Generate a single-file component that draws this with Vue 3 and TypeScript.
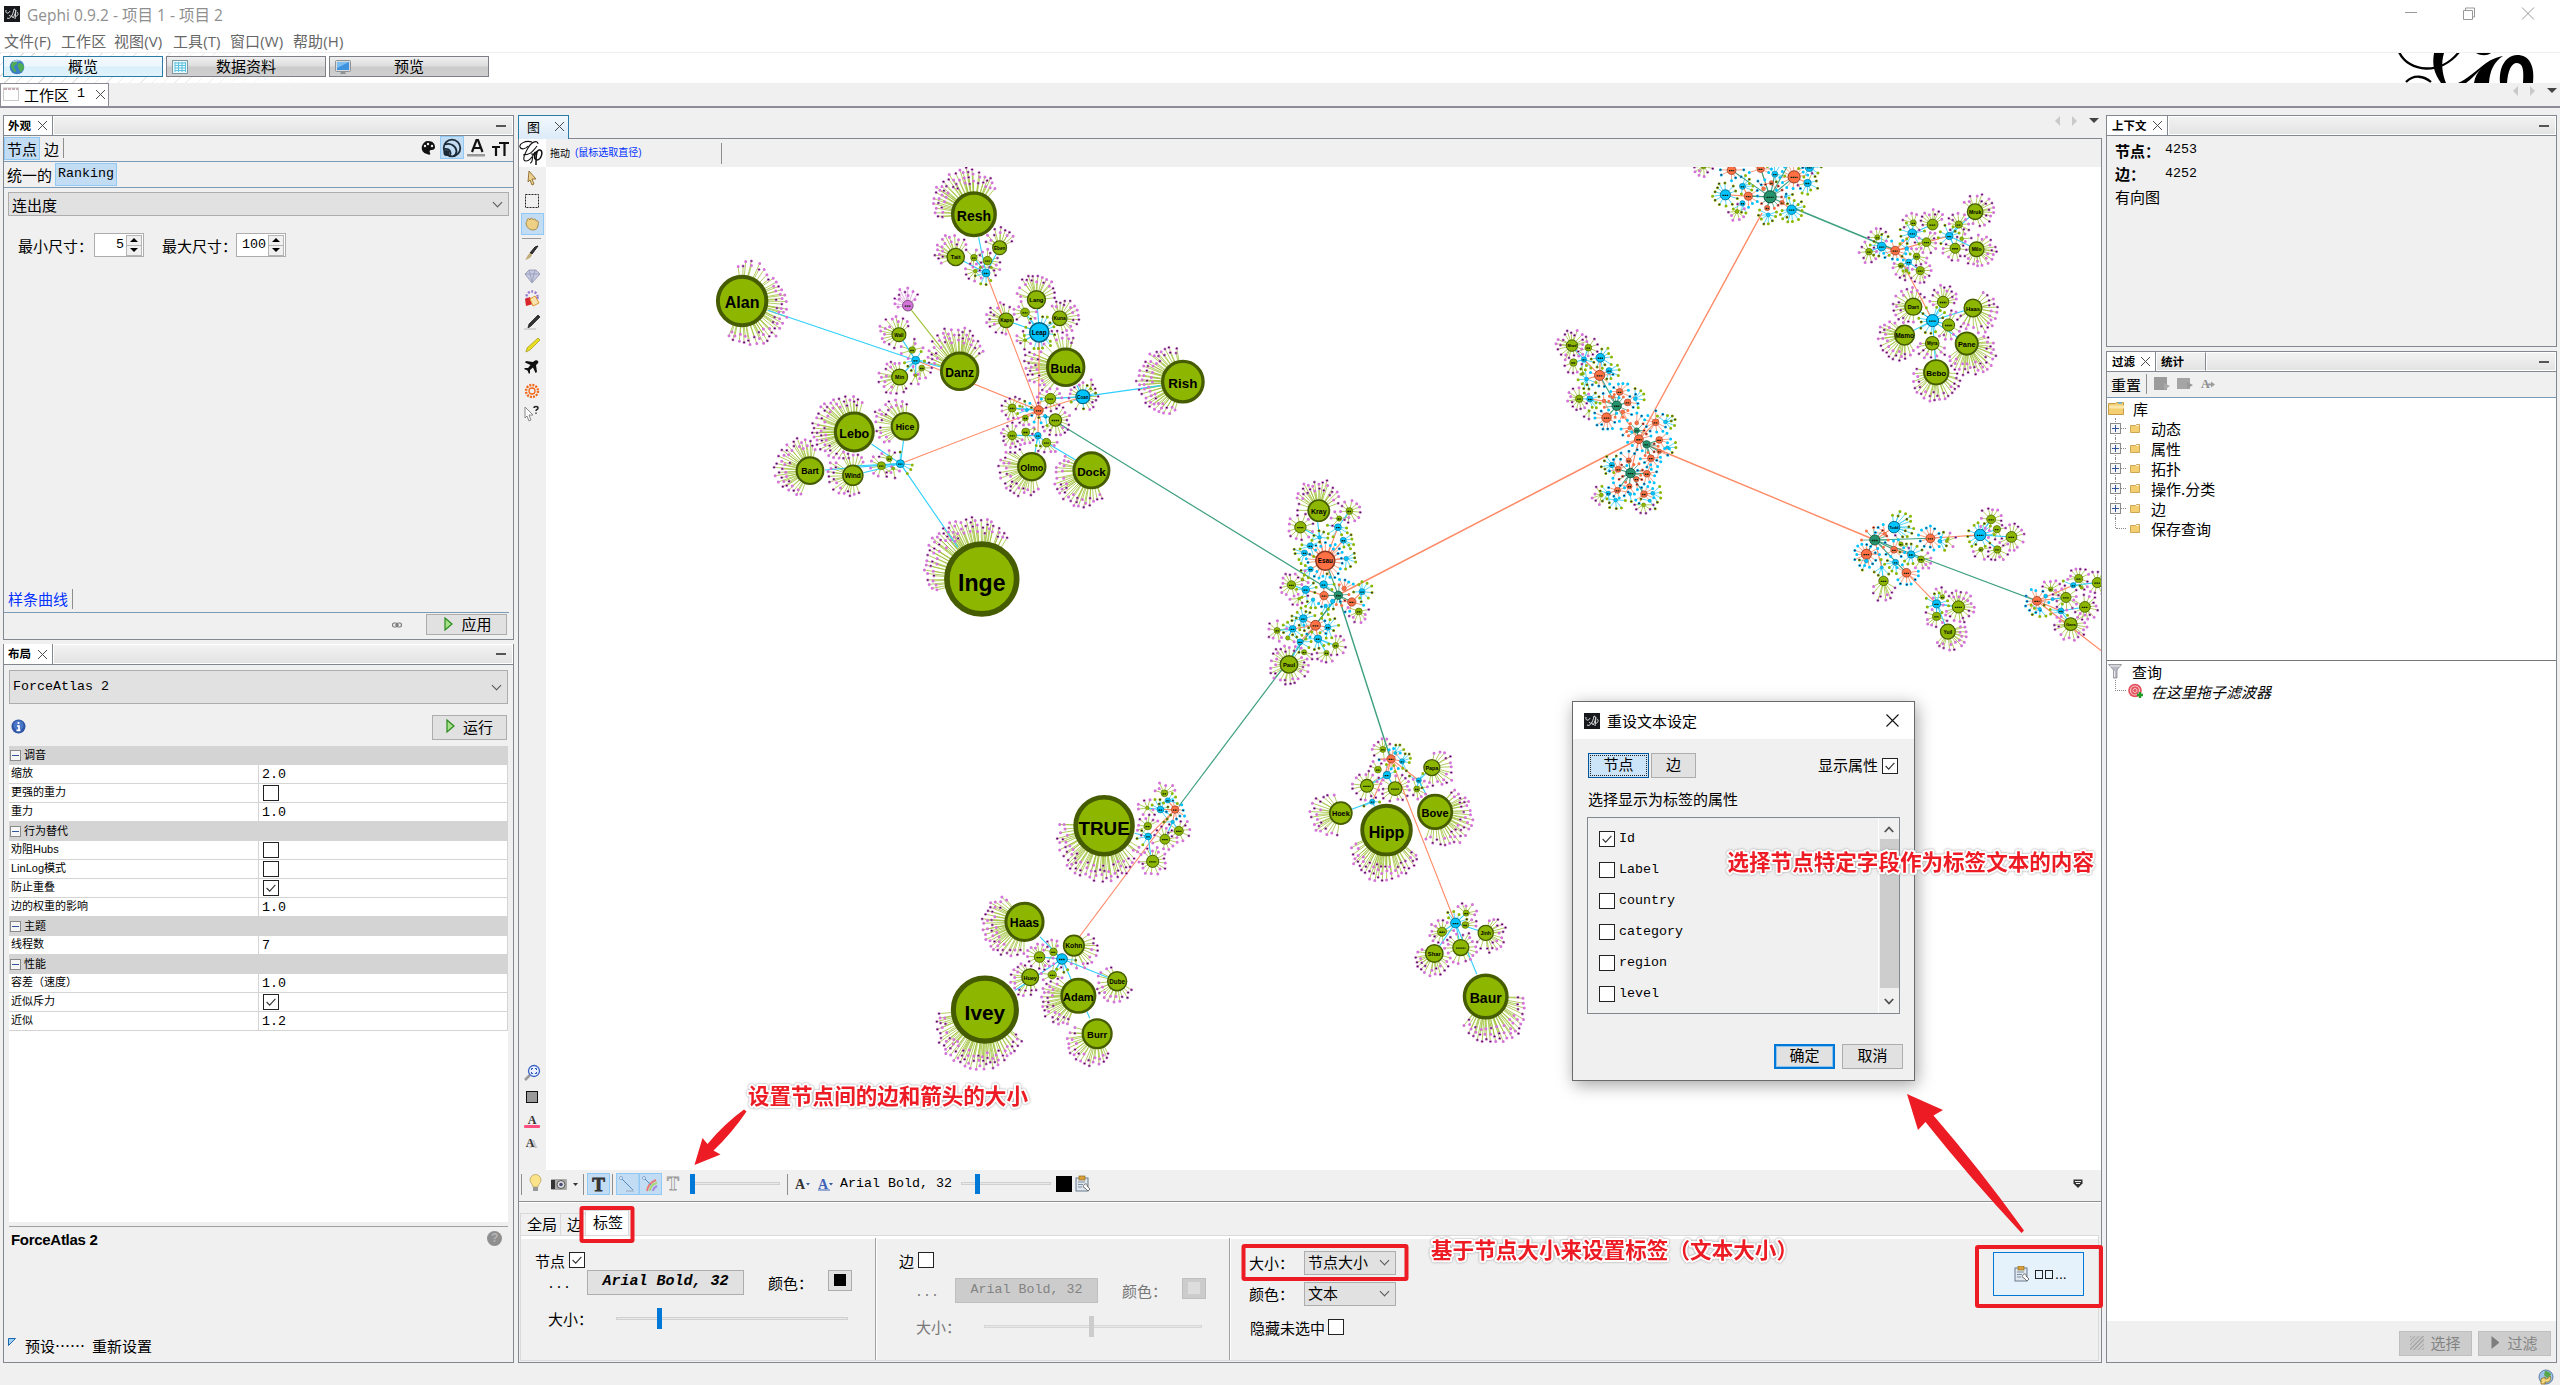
<script setup lang="ts">
type Kind = 'g' | 'b' | 'o' | 't' | 'p'
interface GNode { x: number; y: number; r: number; kind: Kind; n: number; a0: number; a1: number; d: number; label: string; extra: boolean }

const FILL: Record<Kind, string> = { g: '#8db600', b: '#00c4ff', o: '#ff7045', t: '#24936e', p: '#d574d8' }
const RIM: Record<Kind, string> = { g: '#465c00', b: '#00627f', o: '#8a3a22', t: '#124a37', p: '#6d3f6d' }
const EDGE: Record<Kind, string> = { g: '#9fc23a', b: '#2fcfff', o: '#ff8a66', t: '#3c9f80', p: '#d9a0d9' }
const LEAF: Record<Kind, Kind> = { g: 'p', b: 'g', o: 'b', t: 'o', p: 'p' }

/* Each region keeps its own origin and units; rows are: x y r kind [leaves from to depth label] */
const regions = [
  {
    ox: 700, oy: 150, sx: 2.8, sy: 3,
    nodes: `118 453 73 g 120 -40 112 24 Alan;118 453 73 g 9 -100 -40 18;767 193 64 g 110 170 312 26 Resh;716 321 26 g 34 150 320 15 Tait;839 293 21 g 34 200 350 15 Eben
767 323 10 g 6;805 332 13 g 10;771 363 6 g 6;785 352 4 g 3;815 352 4 g 3;801 369 12 b 5;942 449 27 g 38 180 365 18 Lang;1007 505 22 g 28 -130 80 14 Kuna;857 511 22 g 28 90 290 14 Kaps
910 487 13 g 8;910 571 4 g 6;950 547 29 b 16 0 360 7 Leap;1024 652 55 g 95 125 285 24 Buda;1072 740 21 b 4 0 360 6 Coan;1072 740 21 g 16;1094 717 4 g 3;981 746 16 g 14
727 664 55 g 90 195 320 26 Danz;582 467 16 p 22 170 340 13;557 554 21 g 26 100 320 14 Wall;594 600 10 g 6;604 631 12 b 5;559 681 24 g 28 60 270 14 Min;621 654 9 g 8;604 676 5 g 6
1352 695 61 g 95 105 262 25 Rish;432 846 57 g 110 120 285 24 Lebo;574 829 40 g 50 130 275 20 Hice;308 962 40 g 60 110 300 24 Bart;428 976 30 g 44 70 310 17 Wind
530 926 9 g 5;508 947 12 g 12;561 941 12 b 4;541 955 5 g 3;948 781 14 o 7;915 781 5 b 5;966 798 5 b 4;874 774 12 g 12;995 810 19 g 22 0 360 9;911 804 9 g 6;903 770 3 g 3
874 856 13 g 14;912 846 12 g 12;937 838 3 g 3;946 857 10 b 5;970 878 13 g 12;929 950 41 g 60 70 250 21 Olmo;1096 961 53 g 95 65 210 23 Dock;789 1287 105 g 165 165 302 29 Inge`,
    edges: `801 369 948 781 o;948 781 561 941 o;948 781 604 631 o;948 781 1072 740 o;948 781 950 547 o;948 781 946 857 o;948 781 874 774 b;948 781 911 804 o;604 631 190 481 b;561 941 722 1192 b
561 941 480 882 b;561 941 570 872 b;561 941 350 960 b;561 941 457 968 b;561 941 508 947 b;561 941 430 948 b;1072 740 1290 707 b;1072 740 1055 706 b;1072 740 981 746 b;801 369 780 262 b;801 369 839 293 b
801 369 716 321 b;801 369 771 363 b;801 369 767 323 b;950 547 945 476 b;950 547 1007 505 b;950 547 857 511 b;950 547 910 487 b;950 547 910 571 b;604 631 557 554 b;604 631 559 681 b;604 631 672 650 b
604 631 604 676 b;946 857 938 908 b;970 878 1052 930 b;946 857 970 878 b;946 857 874 856 b;582 467 727 664 g;966 798 995 810 b`,
  },
  {
    ox: 900, oy: 460, sx: 2.45, sy: 2.529,
    nodes: `500 925 75 g 130 28 185 27 TRUE;305 1168 49 g 100 90 235 25 Haas;208 1390 83 g 150 38 178 28 Ivey;426 1228 27 g 42 -40 120 16 Kohn;437 1355 44 g 85 105 220 23 Adam
483 1451 38 g 60 60 200 20 Burr;532 1318 25 g 32 30 250 14 Dube;319 1308 22 g 32 60 250 14 Huey;342 1257 14 g 18;376 1244 10 g 8;397 1262 14 b 4;373 1302 11 g 9
619 1015 16 g 18;649 959 13 g 13;683 938 12 g 14;607 926 10 g 9;608 952 9 b 3;638 884 9 b 7;656 861 7 b 5;648 843 9 g 11;674 884 10 o 7;606 880 5 g 9;668 915 5 b 5
953 517 23 g 40 0 360 11 Paul;1042 255 25 o 24 0 360 9 Esau;1026 128 28 g 56 180 345 21 Kray;981 170 15 g 18;1101 129 9 g 12;1076 148 7 g 4;1073 170 9 b 6;1086 203 8 b 8;1005 217 8 b 7
991 235 8 b 7;1006 276 7 b 6;1093 249 6 b 8;1028 196 5 b 5;959 316 11 g 12;994 328 10 b 9;1038 315 10 b 8;1039 343 11 o 9;1074 342 11 t 8;1088 325 6 o 4;1132 333 8 b 9;1107 359 11 o 9
1124 383 9 g 11;1012 353 5 b 5;1060 357 6 b 4;1043 369 5 b 6;988 401 10 b 11;1018 418 13 o 12;1048 423 8 b 8;962 427 9 b 7;924 431 8 g 11;950 450 6 g 7;980 460 8 b 6;1024 452 10 b 9
1067 469 8 g 10;1045 488 7 g 8;990 486 7 g 7;986 302 4 g 6;978 350 4 g 5;1192 936 64 g 110 35 158 27 Hipp;1311 890 44 g 80 -50 110 23 Bove;1080 893 29 g 28 95 250 21 Hoek
1303 778 21 g 34 -90 100 16 Papa;1144 824 17 g 24;1213 831 18 g 20;1193 797 10 b 8;1203 756 11 o 9;1183 732 8 g 8;1230 762 7 b 8;1171 783 9 g 9;1271 810 7 b 3;1266 832 8 g 9;1157 864 7 b 3;1213 741 4 b 5
1435 1357 56 g 60 0 128 29 Baur;1309 1248 23 g 36 10 200 15 Shar;1374 1233 21 g 24;1435 1196 20 g 30 -80 140 14 Jinh;1328 1193 12 g 13;1361 1171 13 b 5;1385 1176 9 g 7;1387 1146 8 g 7`,
    edges: `397 1262 343 1206 b;397 1262 437 1355 b;397 1262 508 1308 b;397 1262 281 1342 b;397 1262 342 1257 b;397 1262 373 1302 b;397 1262 376 1244 b;458 1395 465 1412 b;608 952 575 944 b;608 952 614 998 b
674 884 608 952 o;674 884 638 884 o;674 884 668 915 o;674 884 656 861 o;668 915 649 959 b;668 915 683 938 b;638 884 606 880 b;1157 864 1107 883 b;1157 864 1163 876 b;1203 756 1157 864 o;1203 756 1193 797 o
1203 756 1271 810 o;1203 756 1230 762 o;1203 756 1171 756 o;1271 810 1303 778 b;1271 810 1266 832 b;1271 810 1290 848 b;1193 797 1144 824 b;1193 797 1213 831 b;1361 1171 1309 1248 b;1361 1171 1374 1233 b
1361 1171 1435 1196 b;1361 1171 1413 1300 b;1361 1171 1328 1193 b;1361 1171 1387 1146 b;1042 255 1028 196 o;1042 255 1074 342 t;1028 196 1023 156 b;1028 196 981 170 b;1073 170 1101 129 b;1042 255 1086 203 o
1042 255 1005 217 o;1042 255 991 235 o;1042 255 1006 276 o;1042 255 1093 249 o;1042 255 1073 170 o;1074 342 1018 418 t;1074 342 1039 343 t;1074 342 1107 359 t;1018 418 988 401 o;1018 418 962 427 o
1018 418 980 460 o;1018 418 1024 452 o;1018 418 1048 423 o;980 460 953 517 b;1039 343 994 328 o;1039 343 1038 315 o;994 328 959 316 b;962 427 924 431 b;962 427 950 450 b;1107 359 1132 333 o;1024 452 1067 469 b;1024 452 1045 488 b`,
  },
  {
    ox: 1540, oy: 160, sx: 2.751, sy: 2.958,
    nodes: `527 30 13 o 10;607 26 11 o 8;699 50 18 o 16;741 22 12 b 9;736 68 11 b 5;736 68 11 g 12;646 42 9 b 9;510 103 15 b 20;557 78 9 b 9;573 107 12 o 10;633 109 18 t 14;692 147 14 b 18;557 128 8 b 9
542 152 6 g 9;628 162 6 b 9;625 142 8 o 6;637 68 7 o 6;666 126 7 o 6;450 18 8 g 12;615 85 6 o 5;676 108 4 b 6
1197 153 23 g 38 -150 110 12 Mruk;1201 264 22 g 40 -90 150 13 Milo;1142 261 15 g 16;1126 225 11 b 7;1152 191 11 g 14;1080 191 16 g 26 170 370 10;1024 217 13 b 6;1027 186 9 g 8;1063 243 13 g 12;977 268 13 o 8
940 256 13 b 10;905 271 10 g 13;928 229 8 g 10;1009 262 6 b 5;1036 285 10 g 8;1014 302 9 b 5;993 312 8 g 7;1046 327 12 g 17;1008 327 5 g 6;1160 233 6 g 8
1027 434 25 g 42 80 320 13 Dart;1109 420 17 g 28 160 380 12;1191 438 26 g 48 -60 150 19 Haas;1080 475 18 b 12;1003 518 29 g 66 60 235 19 Mamo;1124 488 18 g 24 0 360 9;1079 542 20 g 32 20 180 14 Myra
1174 543 33 g 80 -30 145 23 Pane;1090 628 36 g 72 -20 195 18 Bebo
88 549 17 g 30 0 360 10 Mrad;133 555 10 g 11;121 590 8 b 6;92 599 11 g 13;166 585 13 b 13;190 623 9 b 9;164 637 15 o 12;128 648 6 b 10;118 632 5 g 8;211 727 14 t 12;219 686 10 o 11;241 717 10 o 9
262 706 6 b 8;108 706 11 g 15;137 707 9 b 8;176 713 6 o 7;183 762 14 o 13;183 762 14 b 8;228 745 6 o 5;200 702 5 o 5;135 742 4 g 5;266 800 8 t 7;272 826 13 o 8;293 841 11 t 10;318 776 10 o 11;328 828 10 o 11
266 778 6 o 6;305 882 10 o 11;328 862 7 o 7;249 926 14 t 14;215 915 9 o 7;198 902 8 b 9;244 889 8 o 7;294 928 10 o 11;265 944 8 o 7;246 965 8 o 7;213 977 9 o 9;286 988 10 o 11;188 986 7 b 9
169 991 6 g 8;208 1006 6 b 9;248 988 5 b 7;285 1020 6 g 8;310 986 6 b 9;302 1008 5 b 8;247 793 6 o 6;345 775 6 b 8;350 850 5 b 5
974 1086 17 b 20 -100 60 16 Todd;921 1124 15 t 7;898 1166 15 o 18;898 1186 6 b 10;974 1153 10 o 8;1021 1167 11 b 8;1048 1181 10 g 11;993 1136 7 g 8;978 1190 9 b 8;1008 1221 13 o 14;945 1245 14 g 12 20 160 16
1074 1119 13 o 12;1100 1128 6 b 7;1119 1127 5 g 6;1211 1109 17 b 13;1241 1063 13 g 18;1257 1092 11 g 9;1297 1115 16 g 26;1258 1152 11 g 15;1213 1152 7 g 8;1091 1313 12 b 7;1151 1322 18 g 30 0 360 10
1091 1350 12 g 12;1122 1395 22 g 34 -60 150 13 Yuil;1107 1293 7 g 9;940 1205 5 b 6;949 1106 5 o 5;1367 1304 13 o 10;1447 1294 15 g 18;1499 1322 16 g 24;1460 1373 19 g 32 0 360 10 Gara;1433 1334 9 b 7
1482 1238 12 g 16;1467 1258 8 b 6;1533 1250 15 g 20;1405 1270 7 g 9;1391 1290 6 b 6;1410 1299 5 b 4;1490 1265 5 g 6;1375 1328 5 b 6`,
    edges: `633 109 527 30 t;633 109 607 26 t;633 109 699 50 t;633 109 573 107 t;633 109 646 42 t;633 109 680 20 t;633 109 666 126 t;633 109 625 142 t;573 107 510 103 o;666 126 692 147 o;699 50 736 68 o;573 107 557 78 o
977 268 940 256 o;977 268 1024 217 o;977 268 1126 225 o;977 268 1014 302 o;977 268 1009 262 o;1000 310 1080 475 o;1024 217 1080 191 b;1024 217 1063 243 b;1024 217 1027 186 b;1126 225 1197 153 b
1126 225 1201 264 b;1126 225 1142 261 b;1126 225 1152 191 b;1014 302 1046 327 b;1014 302 1036 285 b;1014 302 993 312 b;940 256 905 271 b;1080 475 1027 434 b;1080 475 1109 420 b;1080 475 1191 438 b
1080 475 1003 518 b;1080 475 1124 488 b;1080 475 1090 628 b;1080 475 1174 543 b;164 637 166 585 o;164 637 121 590 o;164 637 190 623 o;164 637 128 648 o;121 590 88 549 b;121 590 92 599 b;121 590 133 555 b
164 637 211 727 t;211 727 219 686 t;211 727 241 717 t;211 727 183 762 t;211 727 176 713 t;176 713 137 707 o;137 707 108 706 b;211 727 272 826 o;272 826 266 800 t;272 826 293 841 t;272 826 318 776 o
293 841 328 828 t;293 841 305 882 t;293 841 328 862 t;272 826 249 926 o;249 926 215 915 t;249 926 244 889 t;249 926 294 928 t;249 926 265 944 t;249 926 246 965 t;249 926 213 977 t;249 926 286 988 t
215 915 198 902 o;213 977 188 986 o;286 988 310 986 o;921 1124 974 1086 o;921 1124 898 1166 t;921 1124 974 1153 t;921 1124 1074 1119 t;921 1124 1008 1221 t;921 1124 940 1205 o;940 1205 945 1245 b
974 1153 1021 1167 o;1021 1167 1048 1181 b;1074 1119 1211 1109 o;1211 1109 1241 1063 b;1211 1109 1297 1115 b;1211 1109 1258 1152 b;1211 1109 1257 1092 b;1008 1221 1091 1313 o;1091 1313 1151 1322 b
1091 1313 1091 1350 b;1091 1313 1122 1395 b;1367 1304 1433 1334 o;1367 1304 1447 1294 o;1367 1304 1467 1258 o;1433 1334 1499 1322 b;1433 1334 1460 1373 b;1467 1258 1533 1250 b;1467 1258 1482 1238 b;1410 1299 1447 1294 b`,
  },
]

const nodes: GNode[] = []
const links: { x1: number; y1: number; x2: number; y2: number; c: string; w: number }[] = []
const longLinks: [number, number, number, number, Kind, number][] = [
  [1045, 415, 1338, 595, 't', 1.2], [1338, 595, 1179, 806, 't', 1.2], [1338, 595, 1390, 757, 't', 1.4],
  [1338, 595, 1639, 439, 'o', 1.5], [1639, 439, 1762, 213, 'o', 1.4], [1791, 207, 1895, 250, 't', 1.4],
  [1645, 444, 1875, 540, 'o', 1.4], [1875, 540, 2037, 601, 't', 1.3], [2037, 601, 2103, 652, 'o', 1.3],
  [1175, 809, 1074, 944, 'o', 1.2], [1391, 759, 1455, 922, 'o', 1.1],
]
for (const l of longLinks) links.push({ x1: l[0], y1: l[1], x2: l[2], y2: l[3], c: EDGE[l[4]], w: l[5] })

for (const rg of regions) {
  for (const row of rg.nodes.split(/[;\n]/)) {
    const f = row.trim().split(/\s+/)
    const x = rg.ox + +f[0] / rg.sx
    const y = rg.oy + +f[1] / rg.sy
    /* a second row at the same spot only adds leaves to the node that is already there */
    nodes.push({
      x, y, r: +f[2] / rg.sx, kind: f[3] as Kind, extra: nodes.some(o => o.x === x && o.y === y),
      n: +(f[4] ?? 0), a0: +(f[5] ?? 0), a1: +(f[6] ?? 360), d: +(f[7] ?? 8), label: f[8] ?? '',
    })
  }
  for (const row of rg.edges.split(/[;\n]/)) {
    const f = row.trim().split(/\s+/)
    links.push({
      x1: rg.ox + +f[0] / rg.sx, y1: rg.oy + +f[1] / rg.sy, x2: rg.ox + +f[2] / rg.sx, y2: rg.oy + +f[3] / rg.sy,
      c: EDGE[f[4] as Kind], w: 1.1,
    })
  }
}
const discs = nodes.filter(n => !n.extra)

let seed = 20177
function rnd(): number {
  seed = (seed * 1103515245 + 12345) % 2147483648
  return seed / 2147483648
}

const stalks: Record<Kind, string> = { g: '', b: '', o: '', t: '', p: '' }
const dots: Record<Kind, string> = { g: '', b: '', o: '', t: '', p: '' }
let darkDots = ''
const taken: [number, number][] = []
for (const nd of nodes) {
  let placed = 0
  const span = nd.a1 - nd.a0
  const big = nd.d > 15
  for (let tries = 0; placed < nd.n && tries < nd.n * 12; tries++) {
    const t = rnd()
    const a = (nd.a0 + t * span) * Math.PI / 180
    const reach = span < 300 ? nd.d * (0.5 + 0.5 * Math.sin(Math.PI * t)) * (0.85 + rnd() * 0.15) : nd.d
    const inner = big ? 3 + reach * 0.2 : 3.2
    const rr = nd.r + inner + Math.sqrt(rnd()) * Math.max(reach - inner, 1)
    const x = nd.x + Math.cos(a) * rr
    const y = nd.y + Math.sin(a) * rr
    const gap = 4 + rnd() * 0.7
    if (taken.some(p => Math.abs(p[0] - x) < gap && Math.hypot(p[0] - x, p[1] - y) < gap)) continue
    if (nodes.some(o => o.r > 2 && Math.hypot(o.x - x, o.y - y) < o.r + 2)) continue
    taken.push([x, y])
    placed++
    const k = LEAF[nd.kind]
    stalks[nd.kind] += `M${nd.x.toFixed(1)} ${nd.y.toFixed(1)}L${x.toFixed(1)} ${y.toFixed(1)}`
    dots[k] += `M${x.toFixed(1)} ${y.toFixed(1)}h.01`
    if (rnd() < 0.42) darkDots += `M${(x - 0.8).toFixed(1)} ${y.toFixed(1)}h1.6`
  }
}
const kinds: Kind[] = ['g', 'b', 'o', 't', 'p']

const params = [
  { h: '调音' }, { k: '缩放', v: '2.0' }, { k: '更强的重力', c: 0 }, { k: '重力', v: '1.0' },
  { h: '行为替代' }, { k: '劝阻Hubs', c: 0 }, { k: 'LinLog模式', c: 0 }, { k: '防止重叠', c: 1 }, { k: '边的权重的影响', v: '1.0' },
  { h: '主题' }, { k: '线程数', v: '7' },
  { h: '性能' }, { k: '容差（速度）', v: '1.0' }, { k: '近似斥力', c: 1 }, { k: '近似', v: '1.2' },
] as { h?: string; k?: string; v?: string; c?: number }[]

const menus = [['文件(F)', 57], ['工作区', 53], ['视图(V)', 59], ['工具(T)', 57], ['窗口(W)', 63], ['帮助(H)', 60]] as [string, number][]
const library = ['动态', '属性', '拓扑', '操作.分类', '边', '保存查询']
const fields = ['Id', 'Label', 'country', 'category', 'region', 'level']
</script>

<template>
  <div class="win">
    <header class="title">
      <svg width="16" height="16" viewBox="0 0 16 16"><rect width="16" height="16" fill="#16181b" /><path d="M2 4c-1 4 3 4 4 1M3 12c3 2 6-3 7-9M5 9c2 3 3-1 4 3M10 3c3 0 1 6-1 9M12 4l-1 9M13 6c2 1 1 5-2 4" fill="none" stroke="#dcdcdc" stroke-width="1" /></svg>
      <span class="ttext">Gephi 0.9.2 - 项目 1 - 项目 2</span>
      <svg class="wctl" width="132" height="16" viewBox="0 0 132 16" fill="none" stroke="#999" stroke-width="1"><path d="M1 6.500h12M59.500 4.500h9v9h-9zM61.500 4v-2h9v9h-2M118 1.500l12 12M130 1.500l-12 12" /></svg>
    </header>
    <nav class="menu"><span v-for="m in menus" :key="m[0]" :style="{ width: m[1] + 'px' }">{{ m[0] }}</span></nav>
    <div class="modes">
      <div class="mode on"><svg width="16" height="16" viewBox="0 0 16 16"><circle cx="8" cy="8" r="7.300" fill="#3d7fc4" /><path d="M3 4c2-2 5-2 5 0s-3 2-3 4 2 2 2 4-2 1-3-1-3-4-1-7zM10 4c3 0 5 2 5 4s-2 5-3 5-2-3-3-5 0-3 1-4z" fill="#4fae54" /><path d="M3 3c2-2 6-2 9-1-3 0-6 1-9 1z" fill="#cfe4f5" /></svg><b>概览</b></div>
      <div class="mode"><svg width="16" height="16" viewBox="0 0 16 16"><rect x=".5" y="1.500" width="15" height="13" fill="#eaf7fb" stroke="#7d99a5" /><path d="M3 4h11M3 6.500h11M3 9h11M3 11.500h11M3 3v10M6.500 3v10M10 3v10M13.500 3v10" stroke="#5cc3e0" /></svg><b>数据资料</b></div>
      <div class="mode"><svg width="16" height="16" viewBox="0 0 16 16"><rect x=".5" y="1.500" width="15" height="11" rx="1" fill="#d9dcdf" stroke="#8d9297" /><rect x="2" y="3" width="12" height="8" fill="#3f93de" /><path d="M2 3h12L2 9z" fill="#7dbdf0" /><path d="M5 15h6l-1-2H6z" fill="#8d9297" /></svg><b>预览</b></div>
      <svg class="biglogo" width="140" height="30" viewBox="0 0 140 30"><path d="M1 -1c10 21 42 23 60 0M8 29c8-8 18-6 25 0" fill="none" stroke="#000" stroke-width="2.300" /><path d="M36 0c-2 12 0 20 7 30h5c-4-10-5-20-2-30z" /><path d="M60 30c18-8 26-24 45-27-9 6-13 14-14 27H76c1-6 3-10 7-14-6 6-11 11-15 14zM78 0c5 3 11 3 15 0zM102 30c-1-16 5-27 17-28 12 0 18 10 16 28h-10c1-14 0-19-6-20-6 0-9 8-10 20z" /></svg>
    </div>
    <div class="wsbar">
      <div class="wstab"><svg width="16" height="16" viewBox="0 0 16 16"><rect x=".5" y="2" width="15" height="12.500" fill="#fff" stroke="#c9c9c9" /><path d="M1 3h14" stroke="#c7b0b5" stroke-width="2" stroke-dasharray="3 1" /></svg><span>工作区</span><span class="m">1</span><i class="cx"></i></div>
      <div class="navs"><i class="tl"></i><i class="tr"></i><i class="td"></i></div>
    </div>
    <main class="main">
      <section class="col left">
        <div class="panel p1">
          <div class="ph"><div class="pt">外观<i class="cx"></i></div><div class="pbar"><i class="mn"></i></div></div>
          <div class="row26">
            <span class="sel w36">节点</span><span class="bian">边</span><i class="vs h20"></i><i class="grow"></i>
            <svg class="rank" width="90" height="24" viewBox="0 0 90 24"><rect x="20.500" y=".5" width="23" height="22" fill="#c2dcf3" stroke="#90c8f6" /><path d="M8 5c5 0 7 3 7 6s-3 3-4 3-2 1-1 3-1 2-3 1c-4-1-6-4-5-8 1-3 3-5 6-5z" fill="#111" /><g fill="#f0f0f0"><circle cx="5" cy="10" r="1.200" /><circle cx="8" cy="8" r="1.200" /><circle cx="12" cy="10" r="1.200" /></g><circle cx="32" cy="12" r="8.300" fill="none" stroke="#1b2a36" stroke-width="1.800" /><path d="M25 8.500c6-2 11 2 11.500 6.500 0 2-1 4-3 5M24.500 13c5-1 7 3 5.500 7" fill="none" stroke="#1b2a36" stroke-width="1.800" /><circle cx="26.500" cy="17" r="3" fill="#1b2a36" /><path d="M52 16l4.500-12h1.500l4.500 12M54 12h7" fill="none" stroke="#111" stroke-width="2.200" /><rect x="47" y="18" width="18" height="2.500" fill="#999" /><path d="M72 11h8M76 11v9M79 7h10M84.500 7v13" fill="none" stroke="#111" stroke-width="2.200" /></svg>
          </div>
          <div class="row26"><span class="uni">统一的</span><span class="sel m w62">Ranking</span></div>
          <div class="combo c1"><span>连出度</span><i class="chev"></i></div>
          <div class="spins">
            <span class="sl">最小尺寸：</span><span class="spin m">5<i class="ud"><u></u><s></s></i></span>
            <span class="sl s2">最大尺寸：</span><span class="spin m">100<i class="ud"><u></u><s></s></i></span>
          </div>
          <i class="grow"></i>
          <div class="spline"><span>样条曲线</span><i class="vs h20"></i></div>
          <div class="apply"><svg width="10" height="6" viewBox="0 0 10 6" fill="none" stroke="#777" stroke-width="1.200"><rect x=".6" y="1" width="4.500" height="4" rx="1.500" /><rect x="4.900" y="1" width="4.500" height="4" rx="1.500" /><path d="M3 3h4" /></svg><div class="btn b81"><svg width="9" height="14" viewBox="0 0 9 14"><path d="M1 1l7 6-7 6z" fill="#a6e08a" stroke="#2b8a1c" stroke-width="1.200" /></svg>应用</div></div>
        </div>
        <div class="panel p2">
          <div class="ph"><div class="pt">布局<i class="cx"></i></div><div class="pbar"><i class="mn"></i></div></div>
          <div class="combo c2"><span class="m">ForceAtlas 2</span><i class="chev"></i></div>
          <div class="run">
            <svg width="15" height="15" viewBox="0 0 15 15"><circle cx="7.500" cy="7.500" r="7" fill="#2d55a5" /><circle cx="7.500" cy="6.500" r="5" fill="#4a78c8" /><path d="M7.500 3v2M6 7h2v4M5.500 11.300h4" stroke="#fff" stroke-width="1.700" fill="none" /></svg>
            <div class="btn b75"><svg width="9" height="14" viewBox="0 0 9 14"><path d="M1 1l7 6-7 6z" fill="#a6e08a" stroke="#2b8a1c" stroke-width="1.200" /></svg>运行</div>
          </div>
          <div class="table">
            <div v-for="(p, i) in params" :key="i" class="row" :class="{ th: p.h }">
              <template v-if="p.h"><i class="box minus"></i><span>{{ p.h }}</span></template>
              <template v-else><span class="tk">{{ p.k }}</span><span class="tv m"><i v-if="p.c !== undefined" class="cb"><svg v-if="p.c" viewBox="0 0 16 16"><path d="M3 8l3.500 3.500 6.500-7" /></svg></i>{{ p.v }}</span></template>
            </div>
          </div>
          <div class="desc"><b>ForceAtlas 2</b><span class="q">?</span></div>
          <i class="grow"></i>
          <div class="presets"><svg width="8" height="8" viewBox="0 0 8 8"><path d="M.5.5h7L.5 7.500z" fill="#9bd3f5" stroke="#1c66b0" /></svg><span>预设……</span><span class="reset">重新设置</span></div>
        </div>
      </section>

      <section class="center">
        <div class="ctabs"><div class="ctab">图<i class="cx"></i></div><div class="navs n2"><i class="tl"></i><i class="tr"></i><i class="td"></i></div></div>
        <div class="cbody">
          <div class="tip">
            <span class="glogo"><svg width="26" height="28" viewBox="0 0 26 28" fill="none" stroke="#111" stroke-width="1.100"><path d="M13 3C6 1 0 5 1 8s6 2 8-1M19 5c0-4-6-3-10 4S3 22 7 22s8-7 9-9M4 16c6 0 9-2 14-9M12 15h5M14 15c-1 5 0 9-3 9" /><path d="M19 12c-4 1-5 9-1 9s7-9 3-10-4 8-4 15" stroke-width="1.500" /></svg></span>
            <span class="t1">拖动</span><span class="t2">(鼠标选取直径)</span><i class="vs"></i>
          </div>
          <div class="stage">
            <aside class="tools">
              <svg width="27" height="1003" viewBox="519 167 27 1003">
                <path d="M529 171l7 8h-4l2 5-2 1-2-5-2 2z" fill="#edd08b" stroke="#8a6b2c" stroke-width=".9" />
                <rect x="525.500" y="194.500" width="13" height="13" fill="none" stroke="#222" stroke-dasharray="2 1" />
                <rect x="521.500" y="213.500" width="22" height="21" fill="#c2dcf3" stroke="#90c8f6" />
                <path d="M527 221c0-3 2-3 3-1 0-3 3-2 3 0 1-2 3-1 3 1 2-1 3 1 2 4 0 3-2 5-5 5s-6-2-7-6c0-2 1-3 1-3z" fill="#edcf86" stroke="#9a7a38" stroke-width=".8" />
                <path d="M522 238.500h19" stroke="#999" />
                <path d="M538 246l-6 8-2-1 5-6z" fill="#333" stroke="#222" /><path d="M530 253l2 2c-1 3-4 4-7 5 2-2 2-5 5-7z" fill="#c3ad7a" />
                <path d="M525 274l4-4h7l4 4-8 9z" fill="#c5c8e0" stroke="#8f93ad" stroke-width=".8" /><path d="M525 274h14M529 270l3 12 3-12" stroke="#8f93ad" stroke-width=".7" fill="none" />
                <circle cx="532" cy="297" r="5.500" fill="none" stroke="#9a7ad0" stroke-width="2.500" stroke-dasharray="2 1.500" /><path d="M525 299l5-2 3 7-7 2z" fill="#d8262c" /><path d="M530 299l5-3 4 7-6 3z" fill="#f7e3b0" stroke="#e0962d" />
                <path d="M538 315l2 2-9 9-3 2 1-4z" fill="#333" stroke="#222" stroke-width=".8" /><path d="M524 329h12" stroke="#ccc" stroke-width="1.500" />
                <path d="M538 338l2 2-10 10-4 2 1-4z" fill="#eadf23" stroke="#9c9410" stroke-width=".7" />
                <path d="M538 361c1 1 0 2.500-2 4l1 7-1.500 1-2.500-5.500-3 2.500v3l-1 1-1.500-3.500-3.500-1.500 1-1 3 0 2.500-3-5.500-2.500 1-1.500 7 1c2-2 4-2.500 5-1z" fill="#111" />
                <circle cx="532" cy="391" r="3" fill="none" stroke="#f26a1b" stroke-width="1.300" /><circle cx="532" cy="391" r="6" fill="none" stroke="#f26a1b" stroke-width="2.400" stroke-dasharray="2 1.100" />
                <path d="M525 407l8 8h-4l2 5-2 1-2-5-2 2z" fill="#fff" stroke="#888" /><path d="M534 408c0-2 4-2 4 0s-2 1-2 3M536 412.500v1.300" stroke="#222" stroke-width="1.500" fill="none" />
                <path d="M530 1075l-5 5" stroke="#999" stroke-width="2.500" /><circle cx="534" cy="1071" r="5.500" fill="#e9f0ff" stroke="#3b62c4" stroke-width="1.300" /><path d="M531.500 1070v-1.500h1.500M535 1068.500h1.500v1.500M536.500 1072v1.500h-1.500M533 1073.500h-1.500v-1.500" fill="none" stroke="#2a50b5" />
                <rect x="526.500" y="1091.500" width="11" height="11" fill="#999" stroke="#111" />
                <text x="532" y="1124" class="gly" font-size="12" text-anchor="middle" fill="#333">A</text><rect x="524" y="1125" width="16" height="3" rx="1" fill="#ff4f80" />
                <text x="533" y="1148" class="gly" font-size="12" text-anchor="middle" fill="#c5c5c5">A</text><text x="530" y="1146.500" class="gly" font-size="12" text-anchor="middle" fill="#333">A</text>
              </svg>
            </aside>
            <svg class="canvas" width="1555" height="1003" viewBox="546 167 1555 1003">
              <path v-for="k in kinds" :key="'s' + k" :d="stalks[k]" fill="none" :stroke="EDGE[k]" stroke-width=".8" />
              <line v-for="(l, i) in links" :key="'l' + i" :x1="l.x1" :y1="l.y1" :x2="l.x2" :y2="l.y2" :stroke="l.c" :stroke-width="l.w" />
              <path v-for="k in kinds" :key="'d' + k" :d="dots[k]" fill="none" :stroke="FILL[k]" stroke-width="3" stroke-linecap="round" />
              <path :d="darkDots" fill="none" stroke="#3a1a42" stroke-width="1.200" />
              <g v-for="(n, i) in discs" :key="i">
                <circle :cx="n.x" :cy="n.y" :r="n.r * 0.93" :fill="FILL[n.kind]" :stroke="RIM[n.kind]" :stroke-width="n.r * 0.15" />
                <text v-if="n.label" :x="n.x" :y="n.y + n.r * 0.24 + n.r * n.r * 0.0018" class="nl" :font-size="n.r * 0.615" text-anchor="middle">{{ n.label }}</text>
                <path v-else-if="n.r > 2.500" :d="`M${n.x - n.r * 0.55} ${n.y + 0.5}h${n.r * 1.1}`" stroke="#10230c" stroke-width="1.300" stroke-dasharray="1.600 .5" />
              </g>
            </svg>
          </div>
          <div class="vbar">
            <svg width="321" height="31" viewBox="519 1170 321 31">
              <path d="M521.500 1174v21M583.500 1174v21M612.500 1174v21M787.500 1174v21" stroke="#8e8e8e" />
              <path d="M533 1187c0-3-3-4-3-7a5.500 5.500 0 0111 0c0 3-3 4-3 7z" fill="#fbe38a" stroke="#b29b55" stroke-width=".7" /><rect x="533" y="1187" width="5" height="4" fill="#999" />
              <rect x="551" y="1179" width="16" height="11" rx="1" fill="#a9a9a9" /><rect x="551" y="1180" width="4" height="9" fill="#333" /><circle cx="561" cy="1184.500" r="4" fill="#dcdcdc" stroke="#555" /><circle cx="561" cy="1184.500" r="1.800" fill="#4a4f77" /><path d="M573 1183h5l-2.500 3z" fill="#333" />
              <rect x="587.500" y="1173.500" width="22" height="21" fill="#c2dcf3" stroke="#90c8f6" /><rect x="616.500" y="1173.500" width="22.500" height="21" fill="#c2dcf3" stroke="#90c8f6" /><rect x="639.500" y="1173.500" width="22" height="21" fill="#c2dcf3" stroke="#90c8f6" />
              <text x="598.500" y="1190.500" class="gly" font-size="19" text-anchor="middle" fill="#333" stroke="#333" stroke-width=".8">T</text>
              <path d="M621 1178l12 12" stroke="#5588c0" /><circle cx="621" cy="1178" r="1.500" fill="#fff" stroke="#5588c0" stroke-width=".7" /><path d="M626 1191h8" stroke="#9ab" />
              <path d="M647 1191c1-6 4-9 9-11" stroke="#e87b7b" stroke-width="2" fill="none" /><path d="M650 1191c0-4 3-7 7-8" stroke="#a8d873" stroke-width="2" fill="none" /><path d="M653 1191c0-3 2-4 4-5" stroke="#a58be0" stroke-width="2" fill="none" /><path d="M644 1178l7 7" stroke="#5588c0" /><circle cx="644" cy="1178" r="1.500" fill="#fff" stroke="#5588c0" stroke-width=".7" />
              <text x="673" y="1190" class="gly" font-size="18" text-anchor="middle" fill="#f4f4f4" stroke="#9a9a9a" stroke-width=".8">T</text>
              <rect x="690.500" y="1182.500" width="89" height="2" fill="#e7eaea" stroke="#d0d0d0" /><rect x="690" y="1174" width="5" height="20" fill="#0078d7" />
              <text x="800" y="1189" class="gly" font-size="14" text-anchor="middle" fill="#333">A</text><path d="M806 1183h4l-2 2.500zM829 1183h4l-2 2.500z" fill="#335a9a" /><text x="823" y="1189" class="gly" font-size="14" text-anchor="middle" fill="#3c62b8">A</text><path d="M818 1190h12" stroke="#3c62b8" />
            </svg>
            <span class="m fontn">Arial Bold, 32</span>
            <svg width="140" height="31" viewBox="952 1170 140 31"><rect x="961.500" y="1182.500" width="89" height="2" fill="#e7eaea" stroke="#d0d0d0" /><rect x="975" y="1174" width="5" height="20" fill="#0078d7" /><rect x="1056" y="1176" width="16" height="16" /><g transform="translate(1075 1176)"><rect x="1" y="2" width="12" height="13" fill="#dfe6ee" stroke="#6b7b8d" /><rect x="4" y="0" width="6" height="4" fill="#d9a13c" stroke="#8f6a20" stroke-width=".7" /><path d="M3 6h7M3 8.500h5M3 11h4" stroke="#7d8ea0" /><path d="M9 9c1-2 4-1 3 1l3 3-2 2-3-3c-2 0-2-2-1-3z" fill="#fff" stroke="#555" stroke-width=".8" /></g></svg>
            <i class="grow"></i>
            <svg class="coll" width="10" height="10" viewBox="0 0 10 10"><path d="M.5.5h9v4L5 9 .5 4.500z" fill="#333" /><path d="M2 2.500h6M3 4.500h4" stroke="#eee" /></svg>
          </div>
          <div class="settings">
            <div class="stabs"><span class="stab">全局</span><span class="stab s25">边</span><span class="stab son">标签</span></div>
            <div class="sgrid">
              <div class="sec n">
                <div class="r1">节点<i class="cb"><svg viewBox="0 0 16 16"><path d="M3 8l3.500 3.500 6.500-7" /></svg></i></div>
                <div class="r2"><span class="dots m">...</span><span class="fbtn m">Arial Bold, 32</span><span class="cl">颜色：</span><span class="cbtn"><i></i></span></div>
                <div class="r3"><span class="zl">大小：</span><svg width="232" height="21" viewBox="0 0 232 21"><rect x=".5" y="9.500" width="231" height="2" fill="#e7eaea" stroke="#d0d0d0" /><rect x="41" y="0" width="5" height="21" fill="#0078d7" /></svg></div>
              </div>
              <div class="sec e">
                <div class="r1">边<i class="cb"></i></div>
                <div class="r2"><span class="dots m">...</span><span class="fbtn m">Arial Bold, 32</span><span class="cl">颜色：</span><span class="cbtn"><i></i></span></div>
                <div class="r3"><span class="zl">大小：</span><svg width="218" height="21" viewBox="0 0 218 21"><rect x=".5" y="9.500" width="217" height="2" fill="#e7eaea" stroke="#d6d6d6" /><rect x="105" y="0" width="5" height="21" fill="#ccc" /></svg></div>
              </div>
              <div class="sec z">
                <div class="zr"><span>大小：</span><div class="combo c3"><span>节点大小</span><i class="chev"></i></div></div>
                <div class="zr"><span>颜色：</span><div class="combo c3"><span>文本</span><i class="chev"></i></div></div>
                <div class="zr z3">隐藏未选中<i class="cb"></i></div>
              </div>
              <div class="cfg"><svg width="16" height="16" viewBox="0 0 16 16"><rect x="1" y="2" width="12" height="13" fill="#dfe6ee" stroke="#6b7b8d" /><rect x="4" y="0" width="6" height="4" fill="#d9a13c" stroke="#8f6a20" stroke-width=".7" /><path d="M3 6h7M3 8.500h5M3 11h4" stroke="#7d8ea0" /><path d="M9 9c1-2 4-1 3 1l3 3-2 2-3-3c-2 0-2-2-1-3z" fill="#fff" stroke="#555" stroke-width=".8" /></svg><i class="tofu"></i><i class="tofu"></i><span>...</span></div>
            </div>
          </div>
        </div>
      </section>

      <section class="col right">
        <div class="panel q1">
          <div class="ph"><div class="pt w62t">上下文<i class="cx"></i></div><div class="pbar"><i class="mn"></i></div></div>
          <div class="ctx"><b>节点：</b><span class="m">4253</span></div>
          <div class="ctx"><b>边：</b><span class="m">4252</span></div>
          <div class="ctx">有向图</div>
        </div>
        <div class="panel q2">
          <div class="ph"><div class="pt w49">过滤<i class="cx"></i></div><div class="pbar stat">统计</div><div class="pbar"><i class="mn"></i></div></div>
          <div class="row26 ftool"><span>重置</span><i class="vs h20"></i>
            <svg width="66" height="18" viewBox="0 0 66 18"><rect x="1" y="2" width="13" height="13" fill="#9b9b9b" /><path d="M11 8l6 3-6 4z" fill="#aaa" /><rect x="24" y="3" width="13" height="11" fill="#a5a5a5" /><path d="M34 7l6 3-6 4z" fill="#999" /><text x="48" y="13" class="gly" font-size="12" fill="#8d8d8d">A</text><path d="M55 8.500h3V6.500l4 3-4 3v-2h-3z" fill="#9d9d9d" /></svg>
          </div>
          <div class="tree">
            <div class="troot"><svg width="17" height="13" viewBox="0 0 17 13"><path d="M.5 1.500h7l1-1h7v12H.5z" fill="#f3cf72" stroke="#c79b45" /><path d="M1 3.500h15v3H1z" fill="#fae6a8" /><path d="M10 1h4" stroke="#5bb5e8" stroke-width="1.500" /></svg><span>库</span></div>
            <div v-for="(t, i) in library" :key="t" class="trow" :class="{ last: i === 5 }"><i class="ln"></i><i class="lh"></i><i v-if="i < 5" class="box plus"></i><svg width="10" height="9" viewBox="0 0 10 9"><path d="M.5 1.500h5l1-1h3v8h-9z" fill="#f3cf72" stroke="#cfa656" /><path d="M6.500 1.500h2" stroke="#fff" /></svg><span>{{ t }}</span></div>
          </div>
          <div class="query">
            <div class="troot"><svg width="15" height="15" viewBox="0 0 15 15"><path d="M.5.5h13L9 6v8H5.500V6z" fill="#b9b9c4" stroke="#8b8b95" stroke-width=".8" /><path d="M2 2h10M6.500 7v6" stroke="#eee" /></svg><span class="qx">查询</span></div>
            <div class="qrow"><i></i><svg width="16" height="16" viewBox="0 0 16 16"><circle cx="7" cy="7.500" r="6.800" fill="#e2515c" /><circle cx="7" cy="7.500" r="4.500" fill="none" stroke="#f9c7ca" stroke-width="1.200" /><circle cx="7" cy="7.500" r="2" fill="none" stroke="#f9c7ca" /><path d="M12 9v6M9 12h6" stroke="#239a28" stroke-width="2.400" /></svg><em>在这里拖子滤波器</em></div>
          </div>
          <div class="fbtns"><div class="btn dis"><i class="hatch"></i>选择</div><div class="btn dis"><i class="play"></i>过滤</div></div>
        </div>
      </section>
    </main>
    <footer class="status"><svg width="16" height="16" viewBox="0 0 16 16"><circle cx="8" cy="8" r="7" fill="#9cc3e8" stroke="#5c7ea8" /><path d="M7 2c3 0 6 2 6 4l-4 3-3-3z" fill="#58a64c" /><path d="M3 10l4-2v2c2 0 4-1 5-3 2 4-1 7-5 6v2H3z" fill="#f4d77c" stroke="#8c6a1d" stroke-width=".8" /></svg></footer>

    <div class="dialog">
      <div class="dt"><svg width="16" height="16" viewBox="0 0 16 16"><rect width="16" height="16" fill="#16181b" /><path d="M2 4c-1 4 3 4 4 1M3 12c3 2 6-3 7-9M5 9c2 3 3-1 4 3M10 3c3 0 1 6-1 9M12 4l-1 9M13 6c2 1 1 5-2 4" fill="none" stroke="#dcdcdc" /></svg><span>重设文本设定</span><svg width="13" height="13" viewBox="0 0 13 13"><path d="M.5.5l12 12M12.500.5l-12 12" stroke="#111" stroke-width="1.100" /></svg></div>
      <div class="d1"><div class="tg act">节点</div><div class="tg">边</div><i class="grow"></i><span>显示属性</span><i class="cb"><svg viewBox="0 0 16 16"><path d="M3 8l3.500 3.500 6.500-7" /></svg></i></div>
      <div class="dl">选择显示为标签的属性</div>
      <div class="dlist">
        <div class="items"><div v-for="(f, i) in fields" :key="f" class="it m"><i class="cb"><svg v-if="i === 0" viewBox="0 0 16 16"><path d="M3 8l3.500 3.500 6.500-7" /></svg></i>{{ f }}</div></div>
        <div class="sb"><svg width="10" height="7" viewBox="0 0 10 7"><path d="M.8 6L5 1.500 9.200 6" fill="none" stroke="#505050" stroke-width="1.800" /></svg><i></i><svg width="10" height="7" viewBox="0 0 10 7"><path d="M.8 1L5 5.500 9.200 1" fill="none" stroke="#505050" stroke-width="1.800" /></svg></div>
      </div>
      <div class="db"><div class="tg ok">确定</div><div class="tg">取消</div></div>
    </div>

    <svg class="notes" width="2560" height="1385" viewBox="0 0 2560 1385">
      <g fill="none" stroke="#ed1c24" stroke-width="4"><rect x="581.500" y="1208" width="51" height="33" rx="1" /><rect x="1243.500" y="1246" width="163" height="33" rx="1" /><rect x="1977" y="1247" width="124" height="59" rx="1" /></g>
      <g fill="#ed1c24"><path d="M694.500 1165L702.500 1138 707.500 1144Q724 1124 744 1109.500L746.500 1111.500Q732 1133 713.500 1150.500L720.500 1154.500z" /><path d="M1907 1094L1943 1110 1933.500 1115.500Q1979 1168 2024 1230.500L2021.500 1233Q1970 1178 1925.500 1122L1918 1130z" /></g>
      <g class="nt"><text x="748" y="1104" textLength="280">设置节点间的边和箭头的大小</text><text x="1431" y="1258" textLength="367">基于节点大小来设置标签（文本大小）</text><text x="1727.500" y="869.500" textLength="366.500">选择节点特定字段作为标签文本的内容</text></g>
    </svg>
  </div>
</template>

<style>
body { background: #f0f0f0; overflow: hidden; }
</style>
<style scoped>
.win { width: 2560px; height: 1385px; position: relative; display: flex; flex-direction: column; background: #f0f0f0; color: #000; font: 15px/1 "Noto Sans CJK SC", sans-serif; overflow: hidden; white-space: nowrap; }
.win * { box-sizing: border-box; }
i { font-style: normal; }
svg { display: block; flex: none; }
.m { font-family: "Liberation Mono", monospace; font-size: 13.33px; }
.grow { flex: 1; }
.title { height: 30px; flex: none; background: #fff; display: flex; align-items: center; padding: 0 24px 2px 4px; }
.ttext { color: #8f8f8f; margin-left: 7px; font: 15.5px "Open Sans", "Noto Sans CJK SC", sans-serif; letter-spacing: .02px; }
.wctl { margin-left: auto; }
.menu { height: 23px; flex: none; background: #fff; border-bottom: 1px solid #efefef; display: flex; align-items: center; padding: 0 0 0 4px; color: #666; font-family: "Open Sans", "Noto Sans CJK SC", sans-serif; letter-spacing: .1px; }
.modes { height: 30px; flex: none; display: flex; gap: 3px; padding: 3px 0 0 3px; background: linear-gradient(90deg, rgba(255,255,255,0), #fff 310px), repeating-linear-gradient(135deg, #dedede 0 1px, #fff 1px 8px); position: relative; }
.mode { width: 160px; height: 21px; border: 1px solid #7f7f88; background: linear-gradient(#f0f0f0, #dedede 45%, #cbcbcb 55%, #d0d0d0); display: flex; align-items: center; padding-left: 5px; position: relative; }
.mode b { font-weight: 400; position: absolute; left: 0; right: 0; text-align: center; top: 0; line-height: 17px; padding-left: 0; }
.mode.on { border-color: #2a7ca8; background: linear-gradient(#f3f9fe, #ecf6fd 45%, #d9f0fb 55%, #e2f3fc); }
.biglogo { margin-left: auto; margin-top: -3px; margin-right: 22px; }
.wsbar { height: 25px; flex: none; border-bottom: 2px solid #8c8c96; display: flex; justify-content: space-between; padding-left: 0; }
.wstab { width: 109px; height: 24px; background: #fff; border: 1px solid #8c8c96; display: flex; align-items: center; padding: 0 0 2px 2px; }
.wstab span { margin-left: 5px; }
.wstab .m { margin-left: 8px; }
.wstab .cx { margin-left: 11px; }
.cx { width: 9px; height: 9px; display: inline-block; background: linear-gradient(45deg, transparent 45.500%, #4a4a4a 45.500% 54.500%, transparent 54.500%), linear-gradient(-45deg, transparent 45.500%, #4a4a4a 45.500% 54.500%, transparent 54.500%); flex: none; }
.navs { display: flex; gap: 12px; padding: 3px 3px 0 0; }
.navs i { width: 0; height: 0; border: 5px solid transparent; }
.navs .tl { border-right-color: #c9c9c9; border-left-width: 0; }
.navs .tr { border-left-color: #c9c9c9; border-right-width: 0; }
.navs .td { border-top-color: #444; border-bottom-width: 0; margin-top: 2px; }
.main { display: flex; gap: 4px; padding: 7px 3px 0; height: 1255px; flex: none; }
.col { display: flex; flex-direction: column; gap: 4px; }
.left { width: 511px; }
.right { width: 451px; }
.panel { border: 1px solid #828790; display: flex; flex-direction: column; }
.p1 { height: 525px; flex: none; }
.p2, .q2 { flex: 1; }
.p2 .ph { margin-top: -1px; height: 21px; }
.q1 { height: 232px; flex: none; }
.ph { height: 20px; flex: none; display: flex; border-bottom: 1px solid #828790; font-size: 11.5px; font-weight: 700; }
.pt { width: 49px; background: #fff; border-right: 1px solid #828790; display: flex; align-items: center; padding: 0 5px 0 4px; justify-content: space-between; }
.w62t { width: 61px; padding-left: 5px; }
.w49 { padding-left: 5px; }
.pbar { flex: 1; background: linear-gradient(#f2f2f2, #e3e3e3); border: 1px solid #fff; display: flex; align-items: center; justify-content: flex-end; padding-right: 6px; }
.pbar.stat { flex: none; width: 50px; border-right: 1px solid #828790; justify-content: flex-start; padding: 0 0 0 4px; }
.mn { width: 10px; height: 2px; background: #555; }
.row26 { height: 26px; flex: none; border-bottom: 1px solid #7a9ab8; display: flex; align-items: center; padding-bottom: 1px; }
.rank { margin-right: 3px; }
.sel { background: #c2dcf3; border: 1px solid #90c8f6; height: 23px; display: flex; align-items: center; justify-content: center; }
.w36 { width: 36px; }
.w62 { width: 62px; }
.bian { margin: 0 4px 0 4px; }
.uni { margin: 0 3px 0 3px; width: 45px; }
.vs { width: 1px; background: #8e8e8e; height: 21px; }
.h20 { height: 20px; }
.combo { border: 1px solid #adadad; background: #e1e1e1; display: flex; align-items: center; justify-content: space-between; padding: 0 6px 0 3px; flex: none; }
.chev { width: 7px; height: 7px; border: solid #555; border-width: 0 1px 1px 0; transform: translate(-1px, -2px) rotate(45deg); }
.c1 { height: 24px; width: 501px; margin: 4px 0 0 4px; }
.spins { display: flex; align-items: center; margin: 17px 0 0 14px; height: 24px; }
.sl { width: 76px; }
.s2 { margin-left: 18px; width: 74px; }
.spin { width: 50px; height: 24px; border: 1px solid #adadad; background: #fff; display: flex; align-items: center; justify-content: flex-end; padding-right: 1px; gap: 2px; }
.ud { width: 16px; height: 21px; border: 1px solid #b5b5b5; background: linear-gradient(#b5b5b5, #b5b5b5) center / 100% 1px no-repeat, #f0f0f0; display: flex; flex-direction: column; align-items: center; justify-content: space-around; }
.ud u, .ud s { width: 0; height: 0; text-decoration: none; }
.ud u { border: 4px solid transparent; border-bottom-color: #000; border-top-width: 0; }
.ud s { border: 4px solid transparent; border-top-color: #000; border-bottom-width: 0; }
.spline { height: 26px; border-bottom: 1px solid #7a9ab8; display: flex; align-items: center; color: #0433ff; padding: 0 0 2px 4px; margin-right: 4px; }
.spline .vs { margin-left: 4px; }
.apply { height: 26px; display: flex; align-items: center; justify-content: flex-end; padding: 0 6px 3px 0; gap: 24px; }
.btn { border: 1px solid #adadad; background: #e1e1e1; display: flex; align-items: center; justify-content: center; gap: 8px; padding-bottom: 2px; }
.b81 { width: 81px; height: 21px; padding-left: 3px; }
.b75 { width: 75px; height: 25px; }
.c2 { height: 34px; width: 499px; margin: 5px 0 0 5px; }
.run { height: 42px; flex: none; display: flex; justify-content: space-between; align-items: center; padding: 3px 6px 0 7px; }
.run .b75 { margin-top: 1px; }
.table { width: 499px; height: 476px; margin-left: 5px; background: #fff; flex: none; font: 11px "Liberation Sans", "Noto Sans CJK SC", sans-serif; }
.row { height: 19px; display: flex; align-items: center; border-bottom: 1px solid #d4d4d4; border-right: 1px solid #d4d4d4; line-height: 17px; }
.tk { width: 250px; padding-left: 2px; border-right: 1px solid #d4d4d4; height: 18px; }
.tv { padding-left: 3px; display: flex; }
.tv .cb { margin-left: 1px; }
.table .th { background: #d4d4d4; padding-left: 1px; gap: 3px; }
.box { width: 11px; height: 11px; border: 1px solid #8a8a8a; background: linear-gradient(#33559a, #33559a) center / 7px 1px no-repeat, #f6f6f6; flex: none; }
.plus { background: linear-gradient(#33559a, #33559a) center / 7px 1px no-repeat, linear-gradient(#33559a, #33559a) center / 1px 7px no-repeat, #f6f6f6; }
.cb { width: 16px; height: 16px; border: 1px solid #222; background: #fff; display: block; flex: none; }
.cb svg { width: 14px; height: 14px; fill: none; stroke: #333; stroke-width: 1.3; }
.desc { margin: 4px 5px 0; border-top: 1px solid #a0a0a0; display: flex; justify-content: space-between; padding: 4px 6px 0 2px; font: 15px "Liberation Sans", sans-serif; letter-spacing: -.3px; }
.desc b { line-height: 17px; }
.q { width: 15px; height: 15px; border-radius: 50%; background: #8f8f8f; color: #b5b5b5; font-size: 12px; line-height: 15px; text-align: center; font-weight: 700; }
.presets { height: 30px; display: flex; align-items: flex-start; padding-left: 4px; padding-top: 6px; }
.presets span { margin-left: 9px; }
.presets .reset { margin-left: 7px; }

.center { width: 1584px; display: flex; flex-direction: column; }
.ctabs { height: 24px; flex: none; border-bottom: 1px solid #828790; display: flex; justify-content: space-between; }
.ctab { width: 51px; height: 24px; border: 1px solid #2a7ca8; border-bottom: 0; background: linear-gradient(#f2f8fd, #dcebf9); display: flex; align-items: center; justify-content: space-between; padding: 0 4px 2px 8px; font-size: 13px; }
.n2 { padding-right: 3px; padding-top: 1px; }
.cbody { flex: 1; border: 1px solid #828790; border-top: 0; display: flex; flex-direction: column; }
.tip { height: 28px; flex: none; display: flex; align-items: center; font-size: 10px; }
.glogo { width: 27px; height: 28px; background: #fff; }
.t1 { margin-left: 4px; width: 25px; }
.t2 { color: #0433ff; width: 146px; font-family: "Liberation Sans", "Noto Sans CJK SC", sans-serif; }
.stage { height: 1003px; flex: none; display: flex; }
.tools { width: 27px; }
.canvas { background: #fff; }
.nl { font-family: "Liberation Sans", sans-serif; font-weight: 700; fill: #000; }
.gly { font-family: "Liberation Serif", serif; font-weight: 700; }
.vbar { height: 32px; flex: none; border-bottom: 1px solid #909090; display: flex; padding-right: 18px; }
.fontn { width: 112px; line-height: 28px; }
.coll { margin-top: 9px; }
.settings { flex: 1; border-top: 1px solid #fff; display: flex; flex-direction: column; padding: 7px 2px 1px 1px; }
.stabs { height: 26px; display: flex; align-items: flex-end; flex: none; margin-bottom: -1px; }
.stab { height: 23px; width: 41px; border: 1px solid #d9d9d9; border-bottom: 0; margin-right: -1px; padding: 2px 0 0 6px; }
.s25 { width: 26px; }
.son { height: 26px; width: 44px; background: #fff; padding: 3px 0 0 7px; }
.sgrid { flex: 1; display: flex; border: 1px solid #dadada; box-shadow: inset 0 3px 0 #fff; padding-top: 2px; position: relative; }
.sec { padding-top: 14px; border-right: 1px solid #a0a0a0; box-shadow: 1px 0 0 #fff; }
.n { width: 355px; }
.e { width: 354px; color: #777; }
.z { border: 0; box-shadow: none; padding: 13px 0 0 19px; }
.r1, .r2, .r3 { display: flex; align-items: center; }
.r1 { height: 16px; padding-left: 14px; gap: 4px; }
.r2 { height: 25px; margin-top: 2px; padding-left: 26px; }
.r3 { height: 21px; margin-top: 13px; padding-left: 27px; }
.e .r1 { padding-left: 23px; color: #000; }
.e .r2 { margin-top: 10px; padding-left: 39px; }
.e .r3 { padding-left: 40px; }
.dots { width: 40px; line-height: 25px; padding-top: 3px; }
.fbtn { width: 157px; height: 25px; border: 1px solid #adadad; background: #e1e1e1; display: flex; align-items: center; justify-content: center; font-size: 15px; font-weight: 700; font-style: italic; padding-bottom: 2px; }
.e .fbtn { width: 143px; background: #ccc; border-color: #bfbfbf; font: 13.33px "Liberation Mono", monospace; color: #838383; }
.cl { width: 84px; padding-left: 24px; }
.cbtn { width: 24px; height: 21px; border: 1px solid #adadad; background: #e1e1e1; align-self: flex-start; padding: 3px 5px; }
.cbtn i { display: block; width: 12px; height: 12px; background: #000; }
.e .cbtn { background: #ccc; border-color: #bfbfbf; }
.e .cbtn i { background: #ddd; }
.zl { width: 68px; }
.e .zl { width: 68px; }
.zr { height: 23px; display: flex; align-items: center; margin-bottom: 8px; }
.zr > span { width: 55px; }
.c3 { width: 92px; height: 24px; }
.c3 span { margin-top: -2px; }
.z3 { gap: 3px; margin-top: 14px; height: 16px; padding-left: 1px; }
.cfg { margin: 14px 14px 0 auto; width: 91px; height: 44px; border: 1px solid #0078d7; background: #e5f1fb; display: flex; align-items: center; padding-left: 20px; font: 14px "Liberation Sans", sans-serif; }
.cfg svg { margin-right: 5px; }
.tofu { width: 8px; height: 9px; border: 1px solid #222; margin-right: 2px; }
.ctx { height: 24px; display: flex; align-items: center; padding: 4px 0 0 8px; }
.ctx + .ctx { height: 23px; }
.ctx b { width: 50px; }
.ftool { padding-left: 4px; }
.ftool .vs { margin: 0 6px 0 5px; }
.tree { height: 263px; flex: none; background: #fff; border-bottom: 1px solid #777; }
.troot { height: 20px; display: flex; align-items: center; padding-left: 1px; }
.troot span { margin-left: 8px; }
.troot .qx { margin-left: 9px; }
.trow { height: 20px; display: flex; align-items: center; position: relative; padding-left: 23px; }
.trow .box { position: absolute; left: 3px; top: 5px; }
.ln { position: absolute; left: 8px; top: 0; height: 20px; border-left: 1px dotted #888; }
.last .ln { height: 10px; }
.lh { position: absolute; left: 9px; top: 10px; width: 10px; border-top: 1px dotted #888; }
.trow span { margin-left: 11px; }
.query { flex: 1; background: #fff; }
.query .troot { height: 21px; }
.qrow { height: 18px; display: flex; align-items: center; padding-left: 8px; }
.qrow i { width: 11px; height: 11px; border: dotted #888; border-width: 0 0 1px 1px; margin-top: -12px; }
.qrow svg { margin: 0 7px 0 2px; }
.fbtns { height: 41px; flex: none; display: flex; gap: 6px; justify-content: flex-end; padding: 10px 5px 0; }
.dis { width: 73px; height: 25px; background: #ccc; border-color: #bfbfbf; color: #838383; }
.play { width: 8px; height: 13px; clip-path: polygon(0 0, 100% 50%, 0 100%); background: #7d7d7d; }
.hatch { width: 14px; height: 14px; background: repeating-linear-gradient(135deg, #aaa 0 1px, #c6c6c6 1px 3px); margin-right: -2px; }
.status { flex: 1; display: flex; align-items: flex-end; justify-content: flex-end; padding: 0 6px 0 0; }

.dialog { position: absolute; left: 1572px; top: 701px; width: 343px; height: 380px; border: 1px solid #6a6a6a; background: #f0f0f0; box-shadow: 2px 4px 16px rgba(0,0,0,.36); display: flex; flex-direction: column; }
.dt { height: 37px; background: #fff; display: flex; align-items: center; padding: 0 15px 0 11px; }
.dt span { margin: 0 auto 0 7px; padding-bottom: 1px; }
.d1 { display: flex; align-items: center; margin: 14px 16px 0 15px; height: 25px; gap: 2px; }
.d1 span { padding-bottom: 2px; }
.d1 .cb { margin-left: 2px; }
.tg { width: 61px; height: 25px; border: 1px solid #adadad; background: #e1e1e1; text-align: center; line-height: 20px; }
.d1 .tg + .tg { width: 45px; }
.act { border-color: #005499; background: #cce4f7; outline: 1px dotted #222; outline-offset: -3px; }
.dl { margin: 13px 0 0 15px; height: 16px; }
.dlist { margin: 10px 14px 0; height: 197px; border: 1px solid #828790; display: flex; }
.items { flex: 1; padding: 5px 0 0 11px; }
.it { height: 31px; display: flex; align-items: center; gap: 4px; }
.sb { width: 21px; border-left: 1px solid #fff; display: flex; flex-direction: column; align-items: center; padding: 8px 0; }
.sb i { width: 19px; height: 149px; background: #cdcdcd; margin: 6px 0 10px; }
.db { display: flex; gap: 7px; justify-content: flex-end; margin: 30px 11px 0; }
.ok { border: 2px solid #0078d7; box-shadow: inset 0 0 0 1px #8cc4ee; line-height: 18px; }
.notes { position: absolute; left: 0; top: 0; }
.nt { font: 700 21.6px "Noto Sans CJK SC", sans-serif; fill: #ed1c24; stroke: #fff; stroke-width: 4px; paint-order: stroke; stroke-linejoin: round; filter: drop-shadow(0 0 1px #999); }
</style>
